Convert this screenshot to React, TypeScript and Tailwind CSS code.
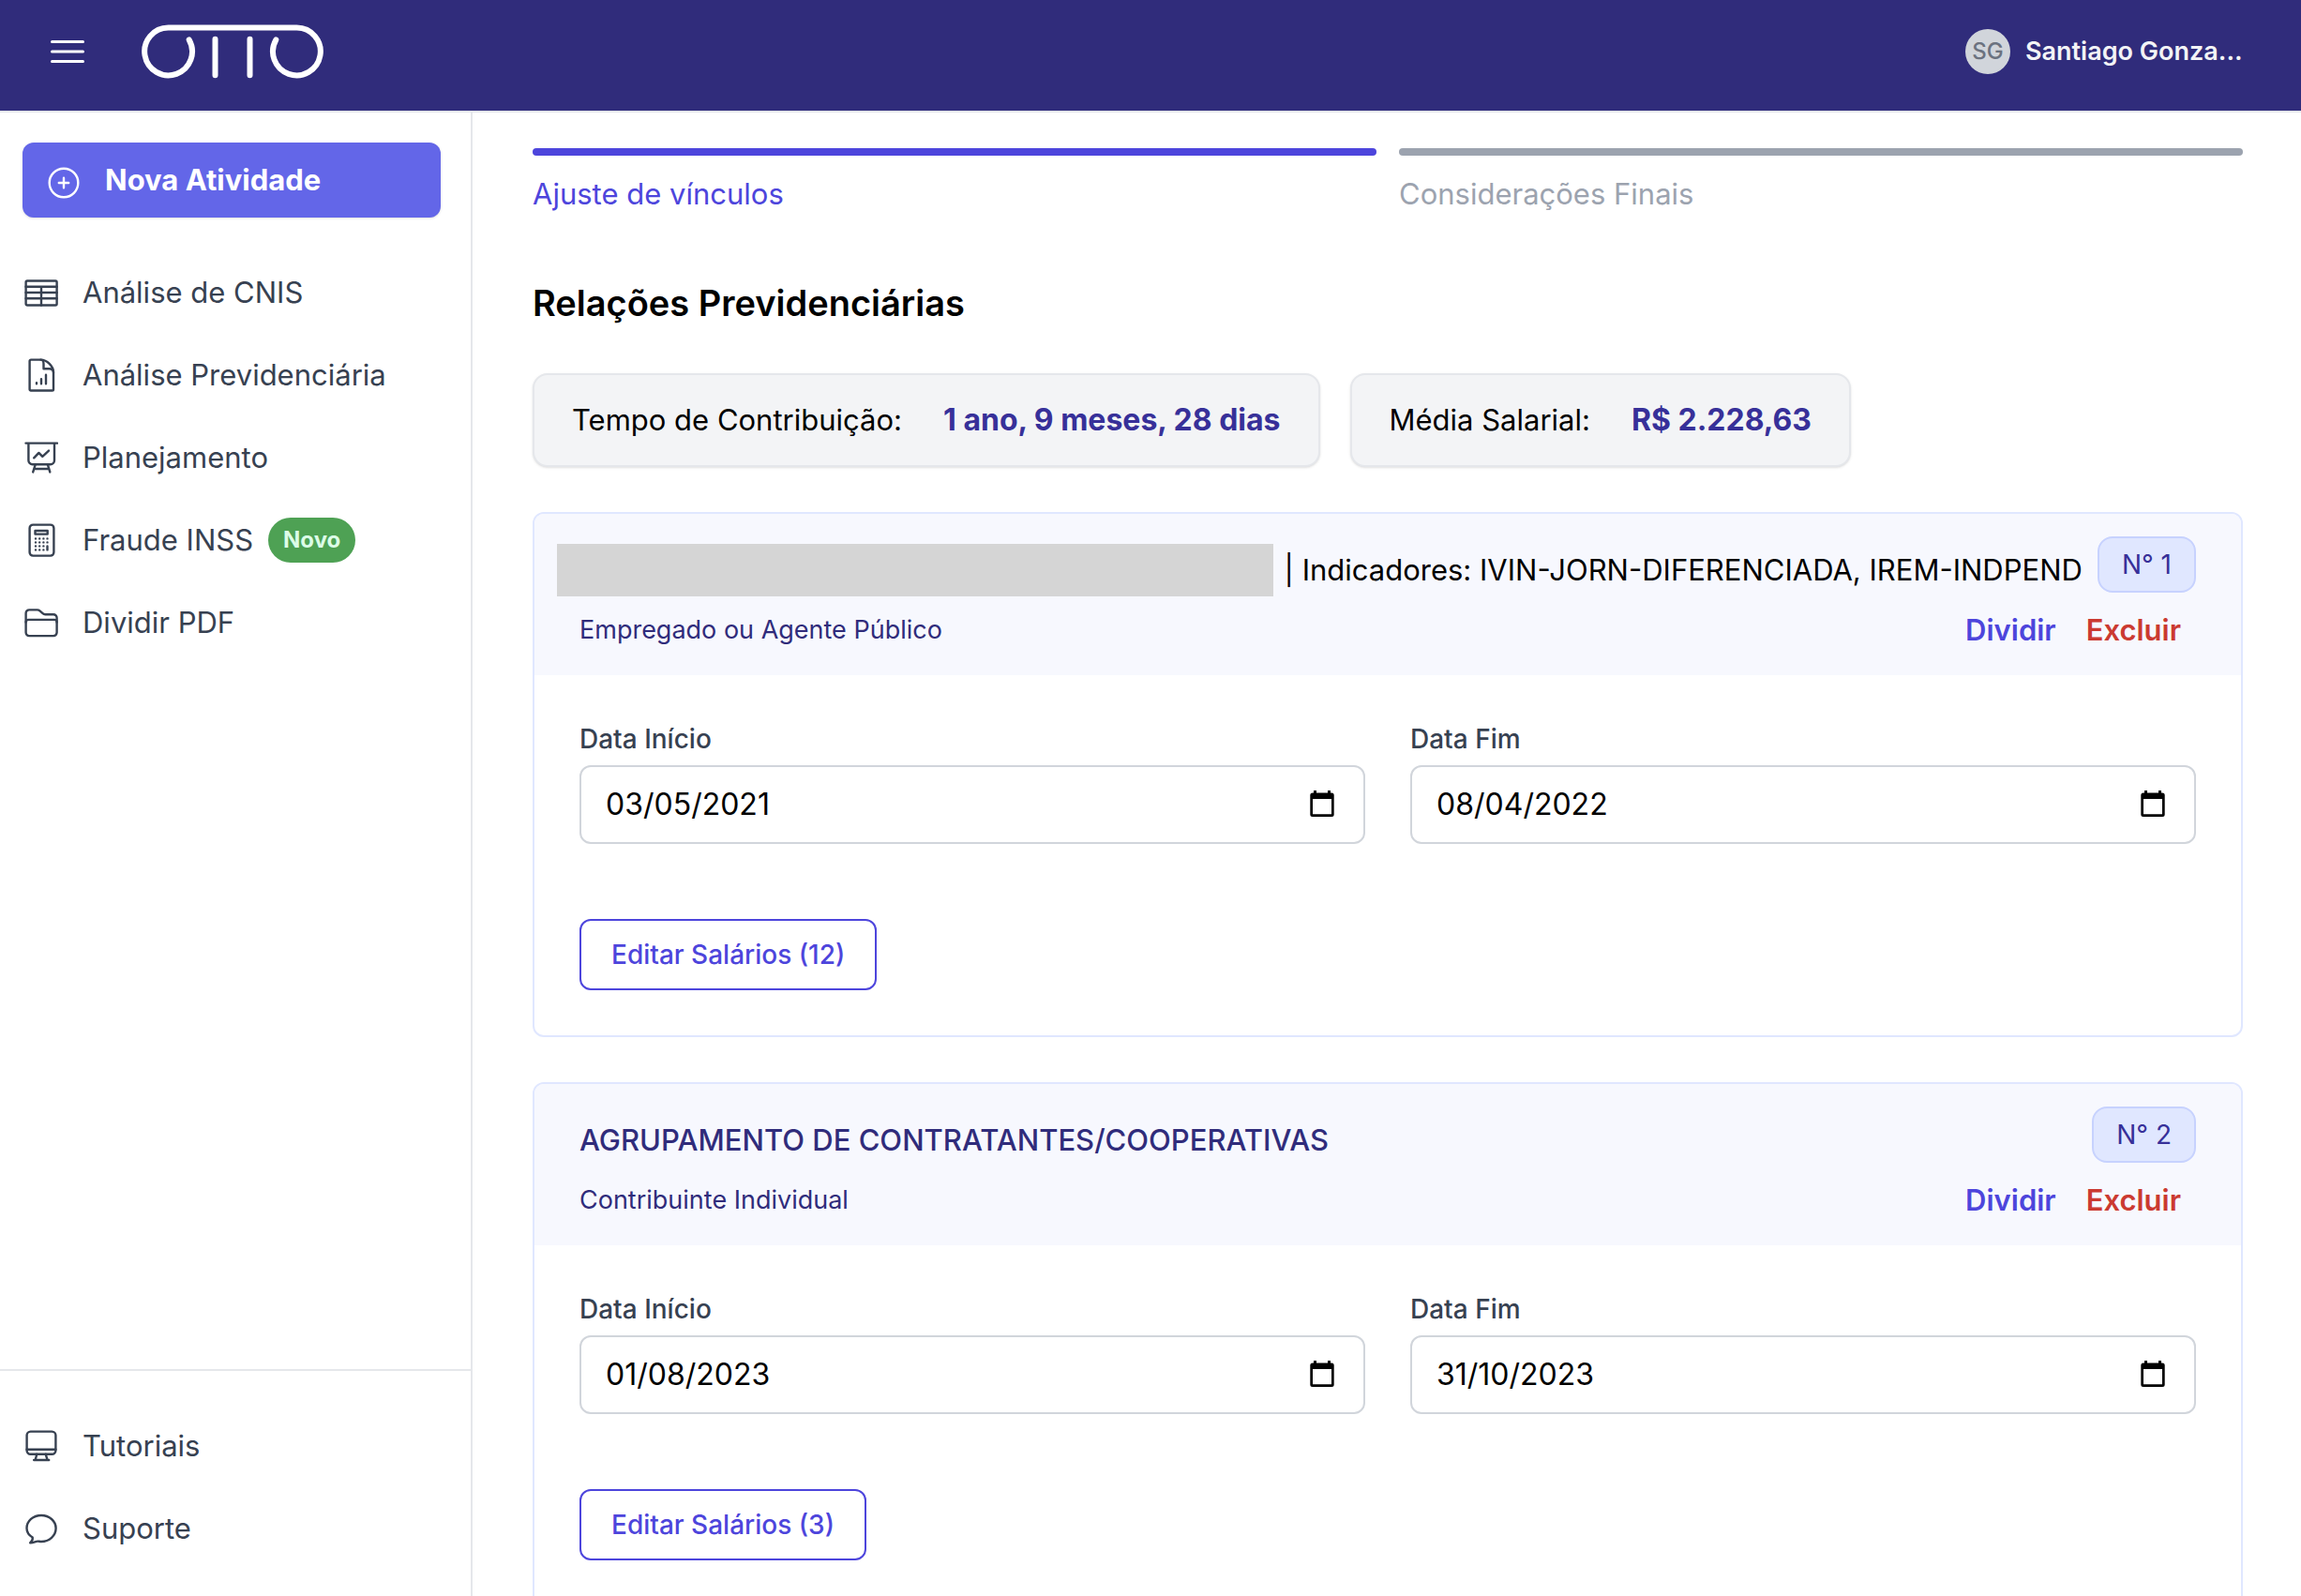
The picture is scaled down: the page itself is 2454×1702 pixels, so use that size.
import type { ReactNode } from "react";

const menuItems = [
  { label: "Análise de CNIS", icon: "table" },
  { label: "Análise Previdenciária", icon: "report" },
  { label: "Planejamento", icon: "board" },
  { label: "Fraude INSS", icon: "calculator", badge: "Novo" },
  { label: "Dividir PDF", icon: "folder" },
];

const helpItems = [
  { label: "Tutoriais", icon: "monitor" },
  { label: "Suporte", icon: "chat" },
];

const relations = [
  {
    number: 1,
    title: "",
    indicators: "| Indicadores: IVIN-JORN-DIFERENCIADA, IREM-INDPEND",
    kind: "Empregado ou Agente Público",
    start: "03/05/2021",
    end: "08/04/2022",
    salaries: 12,
  },
  {
    number: 2,
    title: "AGRUPAMENTO DE CONTRATANTES/COOPERATIVAS",
    indicators: "",
    kind: "Contribuinte Individual",
    start: "01/08/2023",
    end: "31/10/2023",
    salaries: 3,
  },
];

const iconShapes: Record<string, ReactNode> = {
  table: (
    <>
      <rect x="1.6" y="5.5" width="33" height="26" rx="1.5" />
      <path d="M1.6 11.8h33M1.6 18h33M1.6 24.2h33M18 11.8v19.7" />
    </>
  ),
  report: (
    <>
      <path d="M7 1.6h10.5C24 1.6 31 8.5 31 15v18.2a1.3 1.3 0 0 1-1.3 1.3H7a1.3 1.3 0 0 1-1.4-1.3V3A1.4 1.4 0 0 1 7 1.6z" />
      <path d="M17.5 1.6C19.3 1.6 20.5 3.600 20.5 6v5.200h6c2.500 0 4.500 1.300 4.500 3.800" />
      <path d="M13 26.200v1M18 22.300v4.900M23 17.800v9.400" />
    </>
  ),
  board: (
    <>
      <path d="M1.5 2.6H35M4.4 2.6V21a4.2 4.2 0 0 0 4.2 4.2h19.2A4.2 4.2 0 0 0 32 21V2.6" />
      <path d="m10.2 18.3 5.2-5.4 3.9 3.9 6.7-6.2M11.8 25.2l-2.600 8.200M24.800 25.200l2.500 8.200M10.500 30h15.400" />
    </>
  ),
  calculator: (
    <>
      <rect x="5.6" y="1.6" width="25.8" height="33" rx="3.6" />
      <rect x="11.5" y="8" width="13.2" height="3.6" />
      <path d="M12 16.4h.01M16.2 16.4h.01M20.4 16.4h.01M24.5 16.4h.01M12 20.4h.01M16.2 20.4h.01M20.4 20.4h.01M24.5 20.4h.01M12 24.4h.01M16.2 24.4h.01M20.4 24.4h.01M12 28.4h.01M16.2 28.4h.01M20.4 28.4h.01M24.5 24.4v4" />
    </>
  ),
  folder: (
    <>
      <path d="M1.6 28.5V8a3.6 3.6 0 0 1 3.6-3.6h8.6a4 4 0 0 1 2.6 1l3.2 2.8a4 4 0 0 0 2.6 1H31a3.6 3.6 0 0 1 3.6 3.8v15.500a3.600 3.600 0 0 1-3.600 3.600H5.200a3.600 3.600 0 0 1-3.600-3.600z" />
      <path d="M1.6 17.5a2.6 2.6 0 0 1 2.6-2.6H32a2.6 2.6 0 0 1 2.6 2.6" />
    </>
  ),
  monitor: (
    <>
      <rect x="2.6" y="2.6" width="30.8" height="24.2" rx="4" />
      <path d="M2.6 21.7h30.8M13.3 26.8l-1.6 6M22.7 26.8l1.9 6M10.2 33h16" />
    </>
  ),
  chat: (
    <path d="M8.7 27.6C4.8 25.2 2.5 21.7 2.5 17.8 2.5 10 9.4 4 18 4s15.6 6 15.6 13.8S26.6 32 18 32c-1.5 0-2.6-.4-3.8-.4-2.2 0-4.7 1.8-8 1.6 1.8-1.4 3-3 2.5-5.6z" />
  ),
};

const MenuIcon = ({ name }: { name: string }) => (
  <svg
    viewBox="0 0 36 36"
    className="size-9 shrink-0"
    fill="none"
    stroke="currentColor"
    strokeWidth="2.4"
    strokeLinecap="round"
    strokeLinejoin="round"
    aria-hidden="true"
  >
    {iconShapes[name]}
  </svg>
);

const Logo = () => (
  <svg
    viewBox="0 0 200 64"
    className="h-16 w-50"
    fill="none"
    stroke="white"
    strokeWidth="6"
    strokeLinecap="round"
    role="img"
    aria-label="Otto"
  >
    <path d="M53.7 19.4A25.4 25.4 0 1 1 31.5 6.5h137A25.4 25.4 0 1 1 146.3 19.4" />
    <path d="M81.5 18.700v38.600M118.5 18.700v38.600" />
  </svg>
);

type MenuLinkProps = { label: string; icon: string; badge?: string };

const MenuLink = ({ label, icon, badge }: MenuLinkProps) => (
  <li>
    <a href="#" className="flex h-22 items-center text-[31px] text-[#374151]">
      <MenuIcon name={icon} />
      <span className="ml-[26px]">{label}</span>
      {badge && (
        <span className="ml-4 flex h-12 items-center rounded-full bg-[#4ea154] px-4 text-2xl font-bold text-[#dcfce7]">
          {badge}
        </span>
      )}
    </a>
  </li>
);

const Header = () => (
  <header className="flex h-30 shrink-0 items-center border-b-2 border-[#e5e7eb] bg-[#302c7b] pb-2 pl-[54px] pr-[62px]">
    <button type="button" aria-label="Abrir menu">
      <svg
        viewBox="0 0 36 36"
        className="size-9"
        stroke="white"
        strokeWidth="3"
        strokeLinecap="round"
      >
        <path d="M1.5 7.5h33M1.5 18h33M1.5 28.5h33" />
      </svg>
    </button>
    <a href="#" className="ml-[58px]">
      <Logo />
    </a>
    <button type="button" className="ml-auto flex items-center gap-4">
      <span className="flex size-12 items-center justify-center rounded-full bg-[#d1d5db] text-2xl font-medium text-[#6b7280]">
        SG
      </span>
      <span className="w-58 text-left text-[27px] font-semibold whitespace-nowrap text-[#f3f4f6]">
        Santiago Gonza...
      </span>
    </button>
  </header>
);

const Sidebar = () => (
  <aside className="flex w-[504px] shrink-0 flex-col border-r-2 border-[#e5e7eb] pt-8">
    <button
      type="button"
      className="ml-6 mr-8 flex h-20 items-center rounded-xl bg-[#6366e8] pl-6.5 text-[31px] font-bold text-white shadow-sm"
    >
      <svg
        viewBox="0 0 36 40"
        className="h-10 w-9"
        fill="none"
        stroke="currentColor"
        strokeWidth="2.4"
        strokeLinecap="round"
        aria-hidden="true"
      >
        <circle cx="18" cy="23" r="15.3" />
        <path d="M18 17.8v10.4M12.8 23h10.4" />
      </svg>
      <span className="ml-[26px]">Nova Atividade</span>
    </button>
    <nav className="mt-9 px-6.5">
      <ul>
        {menuItems.map((item) => (
          <MenuLink key={item.label} {...item} />
        ))}
      </ul>
    </nav>
    <nav className="mt-auto border-t-2 border-[#e5e7eb] px-6.5 pb-7 pt-9">
      <ul>
        {helpItems.map((item) => (
          <MenuLink key={item.label} {...item} />
        ))}
      </ul>
    </nav>
  </aside>
);

const Steps = () => (
  <ol className="grid grid-cols-2 gap-6 text-[31px] leading-12">
    <li className="text-[#4d45dc]">
      <div className="mb-[17px] h-2 rounded-sm bg-[#4d45dc]" />
      Ajuste de vínculos
    </li>
    <li className="text-[#9ca3af]">
      <div className="mb-[17px] h-2 rounded-sm bg-[#9ca3af]" />
      Considerações Finais
    </li>
  </ol>
);

const Summary = ({ label, value }: { label: string; value: string }) => (
  <div className="flex h-25 items-center gap-11 rounded-2xl border-2 border-[#e5e7eb] bg-[#f3f4f6] px-10 shadow-sm">
    <dt className="text-[31px]">{label}</dt>
    <dd className="text-[32px] font-bold text-[#373099]">{value}</dd>
  </div>
);

type DateFieldProps = { id: string; label: string; value: string };

const DateField = ({ id, label, value }: DateFieldProps) => (
  <div>
    <label
      htmlFor={id}
      className="block text-[28px] leading-10 font-medium text-[#374151]"
    >
      {label}
    </label>
    <div className="mt-2 flex h-21 items-center rounded-xl border-2 border-[#d1d5db] pl-6.5 pr-7.5">
      <input
        id={id}
        type="text"
        inputMode="numeric"
        defaultValue={value}
        className="min-w-0 flex-1 text-[32px] text-black outline-none"
      />
      <button type="button" aria-label={`Abrir calendário: ${label}`}>
        <svg viewBox="0 0 28 32" className="h-8 w-7">
          <path
            fillRule="evenodd"
            d="M5 1h3v2.5h12V1h3v2.5h1.2a2.500 2.500 0 0 1 2.500 2.500v20.500a2.500 2.500 0 0 1-2.500 2.500H3.800a2.500 2.500 0 0 1-2.500-2.500V6a2.500 2.500 0 0 1 2.500-2.500H5zM4 10v16.300h20V10z"
          />
        </svg>
      </button>
    </div>
  </div>
);

type Relation = (typeof relations)[number];

const RelationCard = ({ relation }: { relation: Relation }) => (
  <article className="overflow-hidden rounded-xl border-2 border-[#e0e7ff]">
    <header className="bg-[#f7f8fe] px-12 py-6">
      <div className="flex h-16 items-end justify-between text-[31px]">
        {relation.title ? (
          <h2 className="flex h-14 items-center font-medium text-[#302c7b]">
            {relation.title}
          </h2>
        ) : (
          <h2 className="-ml-6 flex h-14 flex-1 items-center">
            <span className="mr-3 h-14 flex-1 bg-[#d5d5d5]" />
            <span className="mr-4">{relation.indicators}</span>
          </h2>
        )}
        <span className="flex h-15 items-center self-start rounded-2xl border-2 border-[#c7d2fe] bg-[#e0e7ff] px-6 text-[28px] text-[#373099]">
          N° {relation.number}
        </span>
      </div>
      <div className="mt-3 flex h-12 items-center justify-between">
        <p className="text-[27px] text-[#302c7b]">{relation.kind}</p>
        <div className="flex gap-8 pr-4 text-[31px] font-semibold">
          <button type="button" className="text-[#4d45dc]">
            Dividir
          </button>
          <button type="button" className="text-[#cb3a31]">
            Excluir
          </button>
        </div>
      </div>
    </header>
    <div className="p-12">
      <div className="grid grid-cols-2 gap-12">
        <DateField
          id={`start-${relation.number}`}
          label="Data Início"
          value={relation.start}
        />
        <DateField
          id={`end-${relation.number}`}
          label="Data Fim"
          value={relation.end}
        />
      </div>
      <button
        type="button"
        className="mt-20 h-19 rounded-xl border-2 border-[#4d45dc] px-8 text-[28px] font-medium text-[#4d45dc]"
      >
        Editar Salários ({relation.salaries})
      </button>
    </div>
  </article>
);

const App = () => {
  return (
    <div className="flex h-screen flex-col overflow-hidden bg-white font-[Inter,sans-serif] text-black">
      <Header />
      <div className="flex min-h-0 flex-1">
        <Sidebar />
        <main className="min-w-0 flex-1 overflow-y-auto pl-16 pr-[62px] pt-[38px] pb-12 [scrollbar-width:none]">
          <Steps />
          <h1 className="mt-17 text-[38px] leading-12 font-semibold">
            Relações Previdenciárias
          </h1>
          <dl className="mt-[51px] flex gap-8">
            <Summary
              label="Tempo de Contribuição:"
              value="1 ano, 9 meses, 28 dias"
            />
            <Summary label="Média Salarial:" value="R$ 2.228,63" />
          </dl>
          <div className="mt-12 flex flex-col gap-12">
            {relations.map((relation) => (
              <RelationCard key={relation.number} relation={relation} />
            ))}
          </div>
        </main>
      </div>
    </div>
  );
};

export default App;
